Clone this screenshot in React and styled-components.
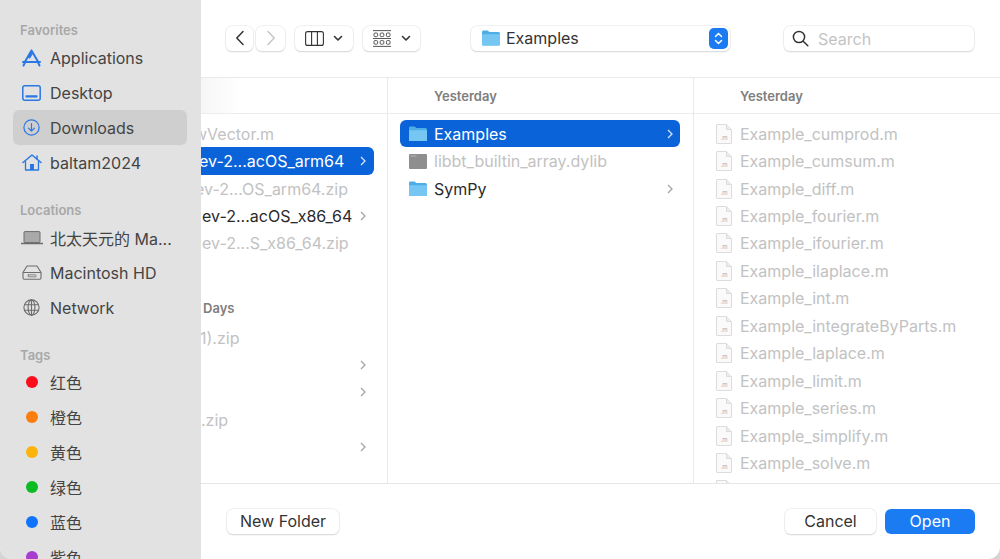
import React from 'react';
import styled, { createGlobalStyle } from 'styled-components';

const Global = createGlobalStyle`
  html, body { margin: 0; padding: 0; background: #d4d4d4; }
  body { font-family: Inter, "Noto Sans CJK SC", "Liberation Sans", sans-serif; overflow: hidden; }
  * { box-sizing: border-box; }
`;

const Window = styled.div`
  width: 1000px; height: 559px; display: flex; overflow: hidden;
  background: #fff; border-radius: 0 0 12px 12px; position: relative;
`;
const Sidebar = styled.aside`
  width: 201px; flex: none; height: 559px; overflow: hidden; background: #e2e2e2;
  padding: 21px 14px 0 13px; display: flex; flex-direction: column; color: #444;
`;
const SideLabel = styled.div`
  font-size: 13px; font-weight: 600; color: #a8a8a8; height: 18px; line-height: 18px; flex: none;
  padding-left: 7px; margin-top: ${p => p.$top || 0}px; margin-bottom: ${p => p.$bottom ?? 1}px;
`;
const SideRow = styled.div`
  height: 35px; display: flex; align-items: center; gap: 7px; padding-left: 7px; flex: none;
  border-radius: 6px; font-size: 16px; background: ${p => p.$active ? '#cfcfcf' : 'transparent'};
`;
const SideIcon = styled.span`
  width: 23px; height: 22px; display: flex; align-items: center; justify-content: center; flex: none;
`;
const Dot = styled.span`
  width: 12px; height: 12px; border-radius: 50%; background: ${p => p.$c};
`;
const Main = styled.main`
  flex: 1; min-width: 0; height: 559px; display: flex; flex-direction: column;
`;
const Toolbar = styled.div`
  height: 78px; flex: none; display: flex; align-items: center; border-bottom: 1px solid #e9e9e9;
  padding: 0 26px 1px 25px;
`;
const Tool = styled.div`
  height: 25px; width: ${p => p.$w}px; margin-left: ${p => p.$ml || 0}px; flex: none;
  background: #fff; border-radius: 6px; display: flex; align-items: center; justify-content: center;
  gap: ${p => p.$gap || 0}px; box-shadow: 0 0 0 .5px #e3e3e3, 0 1px 1.5px rgba(0,0,0,.2);
`;
const PathPop = styled(Tool)`
  justify-content: flex-start; padding: 0 2px 0 11px; gap: 6px; font-size: 16px; color: #333;
`;
const Stepper = styled.span`
  width: 19px; height: 21px; margin-left: auto; background: #1a7bf2; border-radius: 5px;
  display: flex; align-items: center; justify-content: center;
`;
const SearchBox = styled(Tool)`
  justify-content: flex-start; padding: 0 0 0 8px; gap: 9px; font-size: 16px; color: #c4c4c4;
`;
const SearchText = styled.span`
  position: relative; top: 1px;
`;
const Columns = styled.div`
  height: 406px; flex: none; display: flex; border-bottom: 1px solid #e6e6e6;
`;
const Col = styled.div`
  width: ${p => p.$w}px; flex: none; overflow: hidden; display: flex; flex-direction: column;
  border-right: ${p => p.$last ? 'none' : '1px solid #e9e9e9'};
`;
const ColHead = styled.div`
  height: 36px; flex: none; border-bottom: 1px solid #ececec; display: flex; align-items: center;
  padding-left: ${p => p.$pl || 0}px; font-size: 13px; font-weight: 600; color: #7e7e7e;
  background: ${p => p.$fade ? 'linear-gradient(90deg, #f6f6f6, #fff 22%)' : '#fff'};
`;
const List = styled.div`
  padding-top: 6px; display: flex; flex-direction: column;
`;
const Row = styled.div`
  height: 27.45px; flex: none; display: flex; align-items: center; position: relative;
  margin: 0 ${p => p.$mr}px 0 ${p => p.$ml}px; padding-left: ${p => p.$pl}px;
  font-size: 16px; white-space: nowrap; overflow: hidden;
  color: ${p => p.$sel ? '#fff' : p.$dim ? '#c2c2c2' : '#2a2a2a'};
  background: ${p => p.$sel ? '#0a63d8' : 'transparent'};
  border-radius: ${p => p.$flush ? '0 6px 6px 0' : '6px'};
`;
const Name = styled.span`
  margin-left: ${p => p.$shift || 0}px; flex: none;
`;
const IconSlot = styled.span`
  width: ${p => p.$w || 25}px; flex: none; display: flex; align-items: center;
`;
const Chevron = styled.svg`
  position: absolute; right: ${p => p.$r}px; top: 50%; margin-top: -5px; width: 6px; height: 10px;
  fill: none; stroke: ${p => p.$sel ? '#d5e4fb' : '#a4a4a4'}; stroke-width: 1.3;
`;
const SectionHead = styled.div`
  height: 27px; flex: none; margin: 37.5px 0 2.2px; display: flex; align-items: center; font-size: 13px; font-weight: 600;
  color: #7e7e7e; padding-left: 2px;
`;
const Blank = styled.div`height: 27.45px; flex: none;`;
const Footer = styled.div`
  height: 75px; flex: none; display: flex; align-items: center; padding: 0 25px 1px 26px;
`;
const Btn = styled.div`
  height: 25px; width: ${p => p.$w}px; margin-left: ${p => p.$ml || 0}px; border-radius: 6px;
  display: flex; align-items: center; justify-content: center; font-size: 16px; flex: none;
  color: ${p => p.$primary ? '#fff' : '#333'}; background: ${p => p.$primary ? '#1a7bf2' : '#fff'};
  box-shadow: ${p => p.$primary ? 'none' : '0 0 0 .5px #e3e3e3, 0 1px 1.5px rgba(0,0,0,.2)'};
`;
const Spacer = styled.div`flex: 1;`;

const Folder = ({ w = 18 }) => (
  <svg width={w} height={w * 0.86} viewBox="0 0 18 15.5">
    <path d="M0 2a1.5 1.5 0 0 1 1.5-1.5h4.2L7.3 2H16.5A1.5 1.5 0 0 1 18 3.5V14a1.5 1.5 0 0 1-1.5 1.5h-15A1.5 1.5 0 0 1 0 14z" fill="#4daee6" />
    <path d="M0 4.2h18V14a1.5 1.5 0 0 1-1.5 1.5h-15A1.5 1.5 0 0 1 0 14z" fill="#76c6f4" />
  </svg>
);
const Dylib = () => (
  <svg width="18" height="15" viewBox="0 0 18 15">
    <rect width="18" height="15" rx="1" fill="#8e8e8e" />
    <rect x="1.5" y="1.5" width="6" height="1" fill="#b5b5b5" />
  </svg>
);
const MFile = () => (
  <svg width="16" height="20" viewBox="0 0 16 20">
    <path d="M1 .5h9.5L15.5 5.5V19a.5.5 0 0 1-.5.5H1a.5.5 0 0 1-.5-.5V1a.5.5 0 0 1 .5-.5z" fill="#fafafa" stroke="#dcdcdc" />
    <path d="M10.5 .5V5.5H15.5" fill="#ececec" stroke="#dcdcdc" />
    <text x="8" y="16" fontSize="6" textAnchor="middle" fill="#a9a9b8" fontFamily="Inter, sans-serif">.m</text>
  </svg>
);
const Chev = ({ sel, r }) => (
  <Chevron $sel={sel} $r={r} viewBox="0 0 6 10"><path d="M1 1l4 4-4 4" /></Chevron>
);

const S = { fill: 'none', stroke: '#2b78e4', strokeWidth: 1.5, strokeLinecap: 'round', strokeLinejoin: 'round' };
const G = { fill: 'none', stroke: '#6c6c6c', strokeWidth: 1.1, strokeLinecap: 'round', strokeLinejoin: 'round' };

const AppIcon = () => (
  <svg width="19" height="18" viewBox="0 0 19 18"><path d="M9.5 1.5L16.5 13.5M9.5 1.5L2.5 13.5M1 13h17M1.5 16.5l1.5-3M17.5 16.5l-1.5-3M7.5 8.5l2 -3.5" {...S} strokeWidth="2" /></svg>
);
const DesktopIcon = () => (
  <svg width="19" height="16" viewBox="0 0 19 16"><rect x=".8" y=".8" width="17.4" height="14.4" rx="2" {...S} /><rect x="3.5" y="10.2" width="12" height="2.3" rx=".4" fill="#2b78e4" /></svg>
);
const DownIcon = () => (
  <svg width="17" height="17" viewBox="0 0 17 17"><circle cx="8.5" cy="8.5" r="7.6" {...S} strokeWidth="1.2" /><path d="M8.5 4.5v7.5M5.5 9.2l3 3 3-3" {...S} strokeWidth="1.2" /></svg>
);
const HomeIcon = () => (
  <svg width="20" height="17" viewBox="0 0 20 17"><path d="M1 8.5L10 1l9 7.5" {...S} /><path d="M3.5 7.5V16h13V7.5" {...S} strokeWidth="1.3" /><rect x="8" y="10" width="4" height="6" fill="#2b78e4" /><path d="M15 2v3" {...S} /></svg>
);
const LaptopIcon = () => (
  <svg width="22" height="14" viewBox="0 0 22 14"><rect x="3" y=".6" width="16" height="11" rx=".8" fill="#a9a9a9" stroke="#6c6c6c" /><path d="M.5 12.5h21" stroke="#6c6c6c" strokeWidth="1.7" strokeLinecap="round" /></svg>
);
const DiskIcon = () => (
  <svg width="20" height="15" viewBox="0 0 20 15"><path d="M5 1h10l4 6.5v5.5a1.2 1.2 0 0 1-1.2 1.2H2.2A1.2 1.2 0 0 1 1 13V7.5z" {...G} /><path d="M1.5 7.5h17" {...G} /><rect x="6" y="9.8" width="8" height="2" rx=".5" {...G} strokeWidth=".8" /></svg>
);
const GlobeIcon = () => (
  <svg width="17" height="17" viewBox="0 0 17 17"><circle cx="8.5" cy="8.5" r="7.6" {...G} /><ellipse cx="8.5" cy="8.5" rx="3.4" ry="7.6" {...G} /><path d="M1.6 5.7h13.8M1.6 11.3h13.8M8.5 1v15" {...G} /></svg>
);

const favorites = [
  ['Applications', <AppIcon />], ['Desktop', <DesktopIcon />],
  ['Downloads', <DownIcon />, true], ['baltam2024', <HomeIcon />],
];
const locations = [
  ['北太天元的 Ma...', <LaptopIcon />], ['Macintosh HD', <DiskIcon />], ['Network', <GlobeIcon />],
];
const tags = [
  ['红色', '#fb0d1b'], ['橙色', '#fb7d0e'], ['黄色', '#fbb40e'],
  ['绿色', '#0bbb22'], ['蓝色', '#0f74fb'], ['紫色', '#a63fd0'],
];
const files = ['cumprod', 'cumsum', 'diff', 'fourier', 'ifourier', 'ilaplace', 'int', 'integrateByParts', 'laplace', 'limit', 'series', 'simplify', 'solve', 'sum'];

const colOne = [
  { t: 'wVector.m', dim: 1, shift: -7 },
  { t: 'ev-2...acOS_arm64', sel: 1, shift: -2 },
  { t: 'ev-2...OS_arm64.zip', dim: 1, shift: -6 },
  { t: 'ev-2...acOS_x86_64', chev: 1, shift: 1 },
  { t: 'ev-2...S_x86_64.zip', dim: 1, shift: 1 },
];
const colTwo = [
  { t: 'Examples', sel: 1, icon: <Folder /> },
  { t: 'libbt_builtin_array.dylib', dim: 1, icon: <Dylib /> },
  { t: 'SymPy', icon: <Folder /> },
];

export default function App() {
  return (
    <Window>
      <Global />
      <Sidebar>
        <SideLabel>Favorites</SideLabel>
        {favorites.map(([t, ic, a]) => (
          <SideRow key={t} $active={a}><SideIcon>{ic}</SideIcon>{t}</SideRow>
        ))}
        <SideLabel $top={21}>Locations</SideLabel>
        {locations.map(([t, ic]) => (
          <SideRow key={t}><SideIcon>{ic}</SideIcon>{t}</SideRow>
        ))}
        <SideLabel $top={21} $bottom={0}>Tags</SideLabel>
        {tags.map(([t, c]) => (
          <SideRow key={t}><SideIcon><Dot $c={c} /></SideIcon>{t}</SideRow>
        ))}
      </Sidebar>
      <Main>
        <Toolbar>
          <Tool $w={27}>
            <svg width="10" height="16" viewBox="0 0 10 16"><path d="M8 1.5L1.8 8 8 14.5" fill="none" stroke="#333" strokeWidth="1.5" strokeLinecap="round" strokeLinejoin="round" /></svg>
          </Tool>
          <Tool $w={29} $ml={3}>
            <svg width="10" height="16" viewBox="0 0 10 16"><path d="M2 1.5L8.2 8 2 14.5" fill="none" stroke="#c6c6c6" strokeWidth="1.5" strokeLinecap="round" strokeLinejoin="round" /></svg>
          </Tool>
          <Tool $w={58} $ml={10} $gap={9}>
            <svg width="19" height="15" viewBox="0 0 19 15"><rect x=".6" y=".6" width="17.8" height="13.8" rx="2" fill="none" stroke="#333" strokeWidth="1.1" /><path d="M6.6 1v13M12.4 1v13" stroke="#333" strokeWidth="1.1" /></svg>
            <svg width="10" height="7" viewBox="0 0 10 7"><path d="M1.5 1.5L5 5l3.5-3.5" fill="none" stroke="#333" strokeWidth="1.6" strokeLinecap="round" strokeLinejoin="round" /></svg>
          </Tool>
          <Tool $w={57} $ml={10} $gap={10}>
            <svg width="18" height="17" viewBox="0 0 18 17" fill="none" stroke="#444" strokeWidth=".9">
              <path d="M0 .6h18M0 8.5h18M0 16.4h18" />
              <rect x="1" y="3" width="3.6" height="3.6" rx="1" /><rect x="7.2" y="3" width="3.6" height="3.6" rx="1" /><rect x="13.4" y="3" width="3.6" height="3.6" rx="1" />
              <rect x="1" y="10.6" width="3.6" height="3.6" rx="1" /><rect x="7.2" y="10.6" width="3.6" height="3.6" rx="1" /><rect x="13.4" y="10.6" width="3.6" height="3.6" rx="1" />
            </svg>
            <svg width="10" height="7" viewBox="0 0 10 7"><path d="M1.5 1.5L5 5l3.5-3.5" fill="none" stroke="#333" strokeWidth="1.6" strokeLinecap="round" strokeLinejoin="round" /></svg>
          </Tool>
          <PathPop $w={259} $ml={51}>
            <Folder w={18} />Examples
            <Stepper>
              <svg width="11" height="15" viewBox="0 0 11 15" fill="none" stroke="#fff" strokeWidth="1.5" strokeLinecap="round" strokeLinejoin="round"><path d="M2.5 5.5l3-3 3 3M2.5 9.5l3 3 3-3" /></svg>
            </Stepper>
          </PathPop>
          <SearchBox $w={190} $ml={54}>
            <svg width="17" height="17" viewBox="0 0 17 17" fill="none" stroke="#333" strokeWidth="1.5" strokeLinecap="round"><circle cx="7" cy="7" r="5.6" /><path d="M11.2 11.2l4.6 4.6" /></svg>
            <SearchText>Search</SearchText>
          </SearchBox>
        </Toolbar>
        <Columns>
          <Col $w={187}>
            <ColHead $fade />
            <List>
              {colOne.map(r => (
                <Row key={r.t} $ml={0} $mr={13} $pl={0} $sel={r.sel} $dim={r.dim} $flush>
                  <Name $shift={r.shift}>{r.t}</Name>
                  {(r.sel || r.chev) && <Chev sel={r.sel} r={8} />}
                </Row>
              ))}
              <SectionHead>Days</SectionHead>
              <Row $ml={0} $mr={13} $pl={0} $dim><Name $shift={-1}>1).zip</Name></Row>
              <Row $ml={0} $mr={13} $pl={0}><Chev r={8} /></Row>
              <Row $ml={0} $mr={13} $pl={0}><Chev r={8} /></Row>
              <Row $ml={0} $mr={13} $pl={0} $dim><Name $shift={0}>.zip</Name></Row>
              <Row $ml={0} $mr={13} $pl={0}><Chev r={8} /></Row>
            </List>
          </Col>
          <Col $w={306}>
            <ColHead $pl={46}>Yesterday</ColHead>
            <List>
              {colTwo.map(r => (
                <Row key={r.t} $ml={12} $mr={13} $pl={9} $sel={r.sel} $dim={r.dim}>
                  <IconSlot>{r.icon}</IconSlot>
                  <Name>{r.t}</Name>
                  {!r.dim && <Chev sel={r.sel} r={7} />}
                </Row>
              ))}
            </List>
          </Col>
          <Col $w={306} $last>
            <ColHead $pl={46}>Yesterday</ColHead>
            <List>
              {files.map(f => (
                <Row key={f} $ml={12} $mr={13} $pl={10} $dim>
                  <IconSlot $w={24}><MFile /></IconSlot>
                  <Name>{`Example_${f}.m`}</Name>
                </Row>
              ))}
              <Blank />
            </List>
          </Col>
        </Columns>
        <Footer>
          <Btn $w={112}>New Folder</Btn>
          <Spacer />
          <Btn $w={91}>Cancel</Btn>
          <Btn $w={90} $ml={9} $primary>Open</Btn>
        </Footer>
      </Main>
    </Window>
  );
}
